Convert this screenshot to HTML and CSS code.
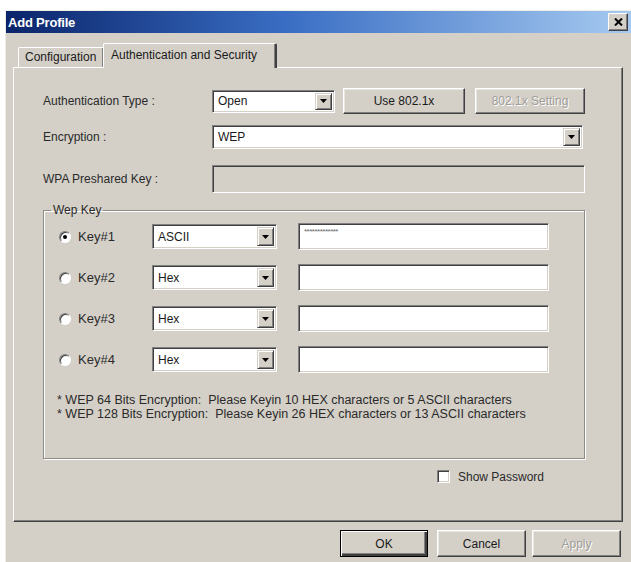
FILE: index.html
```html
<!DOCTYPE html>
<html>
<head>
<meta charset="utf-8">
<title>Add Profile</title>
<link rel="stylesheet" href="styles.css">
</head>
<body>
<div class="window">
  <div class="titlebar">
    <span class="title">Add Profile</span>
    <span class="close"><svg width="9" height="8" viewBox="0 0 9 8"><path d="M1 0.5 L8 7.5 M8 0.5 L1 7.5" stroke="#000" stroke-width="2"/></svg></span>
  </div>
  <div class="client">
    <div class="tabs">
      <div class="tab">Configuration</div>
      <div class="tab active">Authentication and Security</div>
    </div>
    <div class="panel">
      <div class="row r1">
        <span class="label">Authentication Type :</span>
        <div class="combo c-auth"><span class="val">Open</span><span class="drop"><svg width="7" height="4" viewBox="0 0 7 4"><path d="M0 0 H7 L3.5 4 Z" fill="#000"/></svg></span></div>
        <div class="btn b-use">Use 802.1x</div>
        <div class="btn b-set disabled">802.1x Setting</div>
      </div>
      <div class="row r2">
        <span class="label">Encryption :</span>
        <div class="combo c-enc"><span class="val">WEP</span><span class="drop"><svg width="7" height="4" viewBox="0 0 7 4"><path d="M0 0 H7 L3.5 4 Z" fill="#000"/></svg></span></div>
      </div>
      <div class="row r3">
        <span class="label">WPA Preshared Key :</span>
        <div class="field f-wpa disabledfield"></div>
      </div>
      <fieldset class="group">
        <legend>Wep Key</legend>
        <div class="keyrow">
          <span class="radio checked"><span class="dot"></span></span>
          <span class="klabel">Key#1</span>
          <div class="combo c-key"><span class="val">ASCII</span><span class="drop"><svg width="7" height="4" viewBox="0 0 7 4"><path d="M0 0 H7 L3.5 4 Z" fill="#000"/></svg></span></div>
          <div class="field f-key"><span class="mask">*************</span></div>
        </div>
        <div class="keyrow">
          <span class="radio"></span>
          <span class="klabel">Key#2</span>
          <div class="combo c-key"><span class="val">Hex</span><span class="drop"><svg width="7" height="4" viewBox="0 0 7 4"><path d="M0 0 H7 L3.5 4 Z" fill="#000"/></svg></span></div>
          <div class="field f-key"></div>
        </div>
        <div class="keyrow">
          <span class="radio"></span>
          <span class="klabel">Key#3</span>
          <div class="combo c-key"><span class="val">Hex</span><span class="drop"><svg width="7" height="4" viewBox="0 0 7 4"><path d="M0 0 H7 L3.5 4 Z" fill="#000"/></svg></span></div>
          <div class="field f-key"></div>
        </div>
        <div class="keyrow">
          <span class="radio"></span>
          <span class="klabel">Key#4</span>
          <div class="combo c-key"><span class="val">Hex</span><span class="drop"><svg width="7" height="4" viewBox="0 0 7 4"><path d="M0 0 H7 L3.5 4 Z" fill="#000"/></svg></span></div>
          <div class="field f-key"></div>
        </div>
        <div class="notes">
          <div>* WEP 64 Bits Encryption:&nbsp; Please Keyin 10 HEX characters or 5 ASCII characters</div>
          <div>* WEP 128 Bits Encryption:&nbsp; Please Keyin 26 HEX characters or 13 ASCII characters</div>
        </div>
      </fieldset>
      <div class="showpw">
        <span class="checkbox"></span>
        <span class="cblabel">Show Password</span>
      </div>
    </div>
    <div class="buttons">
      <div class="btn b-ok default">OK</div>
      <div class="btn b-cancel">Cancel</div>
      <div class="btn b-apply disabled">Apply</div>
    </div>
  </div>
</div>
</body>
</html>
```

FILE: styles.css
```css
* { box-sizing: border-box; }
html, body { margin: 0; padding: 0; background: #ffffff; }
body {
  font-family: "Liberation Sans", Arial, sans-serif;
  font-size: 12px;
  color: #1a1a1a;
}
.window {
  margin: 10px 0 0 5px;
  width: 626px;
  height: 552px;
  background: #d4d0c8;
  border-left: 1px solid #eeede8;
  border-top: 1px solid #eeede8;
}
.titlebar {
  height: 22px;
  background: linear-gradient(to right, #0a246a 0%, #3a6ec4 45%, #a6caf0 100%);
  display: flex;
  align-items: center;
  justify-content: space-between;
  padding: 0 3px 0 2px;
}
.title {
  color: #ffffff;
  font-weight: bold;
  font-size: 13px;
  letter-spacing: -0.2px;
}
.close {
  width: 20px;
  height: 18px;
  background: #d4d0c8;
  border: 1px solid;
  border-color: #ffffff #404040 #404040 #ffffff;
  box-shadow: inset -1px -1px 0 #808080;
  display: flex;
  align-items: center;
  justify-content: center;
}
.client {
  padding: 10px 0 0 7px;
}
.tabs {
  display: flex;
  align-items: flex-end;
  height: 24px;
  padding-left: 5px;
}
.tab {
  height: 20px;
  line-height: 19px;
  padding: 0 6px;
  border-top: 1px solid #ffffff;
  border-left: 1px solid #ffffff;
  border-right: 1px solid #404040;
  box-shadow: inset -1px 0 0 #808080;
  border-radius: 2px 2px 0 0;
  white-space: nowrap;
}
.tab:first-child {
  width: 86px;
}
.tab.active {
  height: 25px;
  width: 174px;
  margin-left: -1px;
  margin-bottom: -1px;
  line-height: 22px;
  padding-left: 7px;
  background: #d4d0c8;
  position: relative;
  z-index: 2;
  border-right: 2px solid #404040;
}
.panel {
  width: 610px;
  height: 455px;
  border: 1px solid;
  border-color: #ffffff #404040 #404040 #ffffff;
  box-shadow: inset -1px -1px 0 #808080;
  padding: 20px 0 0 29px;
}
.row {
  display: flex;
  align-items: center;
}
.r1 { height: 26px; }
.r2 { height: 24px; margin-top: 11px; }
.r3 { height: 28px; margin-top: 16px; }
.label {
  width: 169px;
  flex: none;
  white-space: nowrap;
  color: #2a2a2a;
}
.combo {
  display: flex;
  align-items: stretch;
  background: #ffffff;
  border: 1px solid;
  border-color: #808080 #ffffff #ffffff #808080;
  box-shadow: inset 1px 1px 0 #404040, inset -1px -1px 0 #d4d0c8;
  padding: 2px;
  flex: none;
}
.combo .val {
  flex: 1;
  display: flex;
  align-items: center;
  padding-left: 3px;
  white-space: nowrap;
}
.combo .drop {
  width: 17px;
  background: #d4d0c8;
  border: 1px solid;
  border-color: #d4d0c8 #404040 #404040 #d4d0c8;
  box-shadow: inset 1px 1px 0 #ffffff, inset -1px -1px 0 #808080;
  display: flex;
  align-items: center;
  justify-content: center;
}
.c-auth { width: 123px; height: 23px; }
.c-enc { width: 371px; height: 24px; }
.c-key { width: 125px; height: 25px; }
.btn {
  display: flex;
  align-items: center;
  justify-content: center;
  background: #d4d0c8;
  border: 1px solid;
  border-color: #ffffff #404040 #404040 #ffffff;
  box-shadow: inset -1px -1px 0 #808080, inset 1px 1px 0 #e8e6e0;
  flex: none;
  white-space: nowrap;
}
.btn.disabled {
  color: #a09e98;
  text-shadow: 1px 1px 0 #ffffff;
}
.btn.default {
  border: 1px solid #000000;
  box-shadow: inset 1px 1px 0 #ffffff, inset -2px -2px 0 #404040, inset -3px -3px 0 #808080;
}
.b-use { width: 122px; height: 26px; margin-left: 8px; }
.b-set { width: 110px; height: 26px; margin-left: 10px; }
.field {
  background: #ffffff;
  border: 1px solid;
  border-color: #808080 #ffffff #ffffff #808080;
  box-shadow: inset 1px 1px 0 #404040, inset -1px -1px 0 #d4d0c8;
  flex: none;
}
.disabledfield { background: #d4d0c8; }
.f-wpa { width: 373px; height: 28px; }
.f-key {
  width: 251px;
  height: 27px;
  margin-left: 21px;
  padding: 4px 0 0 5px;
}
.mask {
  font-size: 8px;
  line-height: 8px;
  color: #666666;
  letter-spacing: -0.5px;
  display: block;
}
.group {
  margin: 10px 0 0 0;
  width: 542px;
  padding: 6px 0 37px 0;
  border: 1px solid #8e8c86;
  box-shadow: 1px 1px 0 #ffffff, inset 1px 1px 0 #ffffff;
  min-width: 0;
}
.group legend {
  margin-left: 7px;
  padding: 0 2px;
  line-height: 14px;
  color: #2a2a2a;
}
.keyrow {
  display: flex;
  align-items: center;
  height: 27px;
  padding-left: 15px;
}
.keyrow + .keyrow { margin-top: 14px; }
.radio {
  width: 12px;
  height: 12px;
  border-radius: 50%;
  background: #ffffff;
  border: 1px solid;
  border-color: #808080 #ffffff #ffffff #808080;
  box-shadow: inset 1px 1px 0 #404040;
  display: flex;
  align-items: center;
  justify-content: center;
  flex: none;
}
.radio .dot {
  width: 4px;
  height: 4px;
  border-radius: 50%;
  background: #000000;
}
.klabel {
  width: 74px;
  margin-left: 7px;
  flex: none;
  font-size: 13px;
  color: #2a2a2a;
}
.notes {
  margin-top: 20px;
  padding-left: 13px;
  font-size: 12.5px;
  line-height: 14px;
  color: #2a2a2a;
  white-space: nowrap;
}
.showpw {
  display: flex;
  align-items: center;
  margin: 11px 0 0 394px;
  height: 13px;
}
.checkbox {
  width: 13px;
  height: 13px;
  background: #ffffff;
  border: 1px solid;
  border-color: #808080 #ffffff #ffffff #808080;
  box-shadow: inset 1px 1px 0 #404040, inset -1px -1px 0 #d4d0c8;
  flex: none;
}
.cblabel {
  margin-left: 8px;
  color: #2a2a2a;
}
.buttons {
  display: flex;
  justify-content: flex-end;
  margin-top: 8px;
  padding-right: 10px;
}
.b-ok { width: 88px; height: 27px; }
.b-cancel { width: 89px; height: 27px; margin-left: 9px; }
.b-apply { width: 89px; height: 27px; margin-left: 6px; }
```
